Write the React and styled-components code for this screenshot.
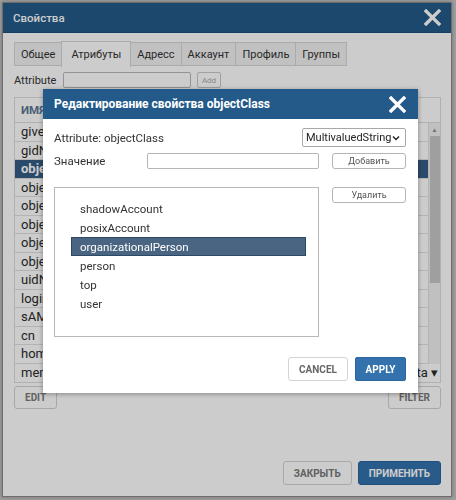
import styled, { createGlobalStyle } from 'styled-components';

const GlobalStyle = createGlobalStyle`
  html, body {
    margin: 0;
    padding: 0;
    background: #c6c6c6;
    overflow: hidden;
  }
  * {
    box-sizing: border-box;
  }
`;

const tabs = ['Общее', 'Атрибуты', 'Адресс', 'Аккаунт', 'Профиль', 'Группы'];

const tableRows = [
  'givenName', 'gidNumber', 'objectClass', 'objectClass', 'objectClass',
  'objectClass', 'objectClass', 'objectClass', 'uidNumber', 'loginShell',
  'sAMAccountName', 'cn', 'homeDirectory',
];

const classes = ['shadowAccount', 'posixAccount', 'organizationalPerson', 'person', 'top', 'user'];

const CloseIcon = ({ size }) => (
  <CloseSvg width={size} height={size} viewBox="0 0 16 16">
    <path d="M2 2L14 14M14 2L2 14" stroke="#fff" strokeWidth="3.2" strokeLinecap="square" />
  </CloseSvg>
);

const Chevron = () => (
  <svg width="8" height="6" viewBox="0 0 8 6">
    <path d="M1 1.5L4 4.5L7 1.5" fill="none" stroke="#222" strokeWidth="1.4" />
  </svg>
);

const App = () => {
  return (
    <Page>
      <GlobalStyle />
      <Dialog>
        <Header>
          <Title>Свойства</Title>
          <CloseIcon size={17} />
        </Header>
        <Body>
          <Tabs>
            {tabs.map((t) => (
              <Tab key={t} $active={t === 'Атрибуты'}>{t}</Tab>
            ))}
          </Tabs>
          <AttrRow>
            <AttrLabel>Attribute</AttrLabel>
            <AttrInput />
            <TinyButton>Add</TinyButton>
          </AttrRow>
          <Table>
            <HeadRow>
              <HeadCell>Имя</HeadCell>
            </HeadRow>
            <ScrollArea>
              <Rows>
                {tableRows.map((r, i) => (
                  <Row key={i} $selected={i === 2}>{r}</Row>
                ))}
              </Rows>
              <Scrollbar>
                <ScrollArrow>▲</ScrollArrow>
                <Thumb />
              </Scrollbar>
            </ScrollArea>
            <LastRow>
              <span>memberOf</span>
              <span>data ▾</span>
            </LastRow>
          </Table>
          <ActionRow>
            <GhostButton>Edit</GhostButton>
            <GhostButton>Filter</GhostButton>
          </ActionRow>
          <Footer>
            <GhostButton>Закрыть</GhostButton>
            <PrimaryButton>Применить</PrimaryButton>
          </Footer>
        </Body>
      </Dialog>

      <Overlay />

      <Modal>
        <ModalHeader>
          <ModalTitle>Редактирование свойства objectClass</ModalTitle>
          <CloseIcon size={17} />
        </ModalHeader>
        <ModalBody>
          <TopRow>
            <Text>Attribute: objectClass</Text>
            <SelectBox>
              <span>MultivaluedString</span>
              <Chevron />
            </SelectBox>
          </TopRow>
          <FieldRow>
            <FieldLabel>Значение</FieldLabel>
            <TextInput />
            <SideButton>Добавить</SideButton>
          </FieldRow>
          <ListRow>
            <ListBox>
              {classes.map((c) => (
                <ListItem key={c} $selected={c === 'organizationalPerson'}>{c}</ListItem>
              ))}
            </ListBox>
            <SideButton>Удалить</SideButton>
          </ListRow>
          <ModalFooter>
            <CancelButton>Cancel</CancelButton>
            <ApplyButton>Apply</ApplyButton>
          </ModalFooter>
        </ModalBody>
      </Modal>
    </Page>
  );
};

const Page = styled.div`
  width: 456px;
  height: 500px;
  padding: 2px 0 0 2px;
  font-family: Roboto, "Liberation Sans", sans-serif;
`;

const Dialog = styled.div`
  width: 450px;
  height: 495px;
  display: flex;
  flex-direction: column;
  background: #fff;
  border: 1px solid #8a8a8a;
  box-shadow: 0 0 4px rgba(0, 0, 0, 0.3);
`;

const Header = styled.div`
  height: 30px;
  flex: none;
  display: flex;
  align-items: center;
  justify-content: space-between;
  padding: 0 10px 0 10px;
  background: #235a8a;
  border-bottom: 1px solid #1d4f7c;
`;

const Title = styled.div`
  color: #fff;
  font-size: 11.5px;
  font-weight: 500;
`;

const CloseSvg = styled.svg`
  display: block;
  flex: none;
`;

const Body = styled.div`
  flex: 1;
  display: flex;
  flex-direction: column;
  padding: 8px 10px 11px 11px;
`;

const Tabs = styled.div`
  display: flex;
  align-items: flex-end;
  height: 26px;
`;

const Tab = styled.div`
  height: ${(p) => (p.$active ? '26px' : '24px')};
  margin-bottom: ${(p) => (p.$active ? '0' : '1px')};
  display: flex;
  align-items: center;
  padding: 0 ${(p) => (p.$active ? '9px' : '6px')};
  font-size: 11px;
  color: #333;
  background: ${(p) => (p.$active ? '#fff' : '#f2f2f2')};
  border: 1px solid #d6d6d6;
  border-bottom: ${(p) => (p.$active ? 'none' : '1px solid #d6d6d6')};
  margin-right: -1px;
`;

const AttrRow = styled.div`
  display: flex;
  align-items: center;
  margin-top: 5px;
  height: 16px;
`;

const AttrLabel = styled.div`
  width: 49px;
  font-size: 11px;
  color: #333;
`;

const AttrInput = styled.div`
  width: 128px;
  height: 16px;
  border: 1px solid #b8b8b8;
  border-radius: 2px;
  background: #fff;
`;

const TinyButton = styled.div`
  margin-left: 6px;
  width: 24px;
  height: 16px;
  display: flex;
  align-items: center;
  justify-content: center;
  font-size: 8px;
  color: #aaa;
  border: 1px solid #c8c8c8;
  border-radius: 2px;
`;

const Table = styled.div`
  margin-top: 9px;
  width: 427px;
  border: 1px solid #dcdcdc;
`;

const HeadRow = styled.div`
  height: 25px;
  display: flex;
  align-items: center;
  border-bottom: 1px solid #dcdcdc;
`;

const HeadCell = styled.div`
  padding-left: 6px;
  font-size: 11.5px;
  font-weight: 700;
  text-transform: uppercase;
  color: #5b7693;
`;

const ScrollArea = styled.div`
  display: flex;
`;

const Rows = styled.div`
  flex: 1;
`;

const Row = styled.div`
  height: 18.5px;
  display: flex;
  align-items: center;
  padding-left: 6px;
  font-size: 13px;
  font-weight: ${(p) => (p.$selected ? 700 : 400)};
  color: ${(p) => (p.$selected ? '#fff' : '#2a2a2a')};
  background: ${(p) => (p.$selected ? '#355d85' : '#fff')};
  border-bottom: 1px solid #e0e0e0;
`;

const Scrollbar = styled.div`
  width: 12px;
  flex: none;
  display: flex;
  flex-direction: column;
  align-items: center;
  background: #f0f0f0;
  border-left: 1px solid #e0e0e0;
`;

const ScrollArrow = styled.div`
  font-size: 6px;
  color: #888;
  height: 13px;
  line-height: 13px;
`;

const Thumb = styled.div`
  width: 10px;
  height: 147px;
  background: #c7c7c7;
`;

const LastRow = styled.div`
  height: 18px;
  display: flex;
  align-items: center;
  justify-content: space-between;
  padding: 0 2px 0 6px;
  font-size: 13px;
  color: #2a2a2a;
`;

const ActionRow = styled.div`
  display: flex;
  justify-content: space-between;
  width: 427px;
  margin-top: 3px;
`;

const GhostButton = styled.div`
  height: 23px;
  padding: 0 10px;
  display: flex;
  align-items: center;
  justify-content: center;
  font-size: 10px;
  font-weight: 700;
  text-transform: uppercase;
  color: #7a7a7a;
  background: #fff;
  border: 1px solid #d2d2d2;
  border-radius: 3px;
`;

const Footer = styled.div`
  margin-top: auto;
  display: flex;
  justify-content: flex-end;
  gap: 6px;
  width: 427px;

  & > div {
    height: 24px;
  }
`;

const PrimaryButton = styled.div`
  height: 24px;
  padding: 0 10px;
  display: flex;
  align-items: center;
  font-size: 10px;
  font-weight: 700;
  text-transform: uppercase;
  color: #fff;
  background: #3472ad;
  border: 1px solid #2b659c;
  border-radius: 3px;
`;

const Overlay = styled.div`
  position: fixed;
  inset: 0;
  background: rgba(0, 0, 0, 0.2);
`;

const Modal = styled.div`
  position: fixed;
  left: 43px;
  top: 89px;
  width: 375px;
  height: 304px;
  display: flex;
  flex-direction: column;
  background: #fff;
  box-shadow: 0 1px 5px rgba(0, 0, 0, 0.35);
`;

const ModalHeader = styled.div`
  height: 30px;
  flex: none;
  display: flex;
  align-items: center;
  justify-content: space-between;
  padding: 0 12px 0 11px;
  background: #235a8a;
`;

const ModalTitle = styled.div`
  color: #fff;
  font-size: 12px;
  font-weight: 700;
`;

const ModalBody = styled.div`
  flex: 1;
  display: flex;
  flex-direction: column;
  padding: 9px 12px 12px 11px;
`;

const TopRow = styled.div`
  display: flex;
  align-items: center;
  justify-content: space-between;
  height: 19px;
`;

const Text = styled.div`
  font-size: 11.5px;
  color: #333;
`;

const SelectBox = styled.div`
  width: 104px;
  height: 19px;
  display: flex;
  align-items: center;
  justify-content: space-between;
  padding: 0 5px 0 3px;
  font-size: 11px;
  color: #222;
  border: 1px solid #a8a8a8;
  border-radius: 2px;
`;

const FieldRow = styled.div`
  display: flex;
  align-items: center;
  margin-top: 6px;
  height: 16px;
`;

const FieldLabel = styled.div`
  width: 93px;
  font-size: 11.5px;
  color: #333;
`;

const TextInput = styled.div`
  width: 172px;
  height: 16px;
  border: 1px solid #b5b5b5;
  border-radius: 2px;
`;

const SideButton = styled.div`
  margin-left: 13px;
  width: 74px;
  height: 16px;
  display: flex;
  align-items: center;
  justify-content: center;
  font-size: 9px;
  color: #555;
  border: 1px solid #b5b5b5;
  border-radius: 3px;
`;

const ListRow = styled.div`
  display: flex;
  align-items: flex-start;
  margin-top: 18px;
`;

const ListBox = styled.div`
  width: 265px;
  height: 150px;
  padding: 11px 12px 0 16px;
  border: 1px solid #b8b8b8;
`;

const ListItem = styled.div`
  height: 19px;
  display: flex;
  align-items: center;
  padding-left: 8px;
  font-size: 11.5px;
  color: ${(p) => (p.$selected ? '#fff' : '#333')};
  background: ${(p) => (p.$selected ? '#4a6581' : 'transparent')};
  border: 1px solid ${(p) => (p.$selected ? '#2c4a68' : 'transparent')};
`;

const ModalFooter = styled.div`
  margin-top: auto;
  display: flex;
  justify-content: flex-end;
  gap: 7px;
`;

const CancelButton = styled.div`
  width: 60px;
  height: 24px;
  display: flex;
  align-items: center;
  justify-content: center;
  font-size: 10px;
  font-weight: 700;
  text-transform: uppercase;
  color: #666;
  border: 1px solid #d4d4d4;
  border-radius: 3px;
`;

const ApplyButton = styled.div`
  width: 51px;
  height: 24px;
  display: flex;
  align-items: center;
  justify-content: center;
  font-size: 10px;
  font-weight: 700;
  text-transform: uppercase;
  color: #fff;
  background: #3472ad;
  border: 1px solid #2b659c;
  border-radius: 2px;
`;

export default App;
